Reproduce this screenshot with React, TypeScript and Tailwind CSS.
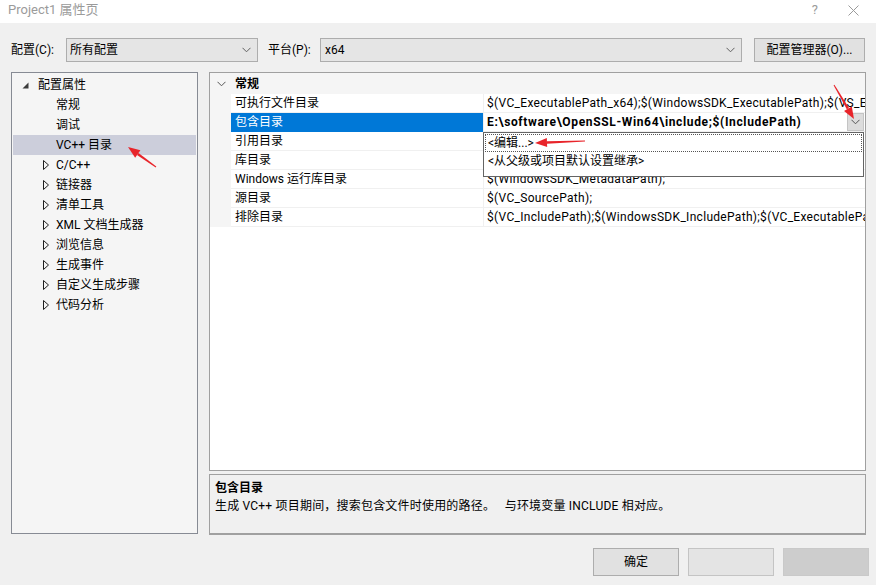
import React from "react";

const FONT = '"Segoe UI", Roboto, "Noto Sans CJK SC", sans-serif';

function Arrow({ x1, y1, x2, y2 }: { x1: number; y1: number; x2: number; y2: number }) {
  const dx = x2 - x1;
  const dy = y2 - y1;
  const len = Math.sqrt(dx * dx + dy * dy);
  const ux = dx / len;
  const uy = dy / len;
  const px = -uy;
  const py = ux;
  const hl = 12;
  const hw = 4.5;
  const bx = x2 - ux * hl;
  const by = y2 - uy * hl;
  const shaft = [
    [x1 + px * 0.5, y1 + py * 0.5],
    [bx + px * 1.3, by + py * 1.3],
    [bx - px * 1.3, by - py * 1.3],
    [x1 - px * 0.5, y1 - py * 0.5],
  ];
  const head = [
    [x2, y2],
    [bx + px * hw, by + py * hw],
    [bx - px * hw, by - py * hw],
  ];
  const s = (pts: number[][]) => pts.map((p) => p.join(",")).join(" ");
  return (
    <g fill="#e8242a">
      <polygon points={s(shaft)} />
      <polygon points={s(head)} />
    </g>
  );
}

function Chevron({ className = "", color = "#606060" }: { className?: string; color?: string }) {
  return (
    <svg width="9" height="6" viewBox="0 0 9 6" className={className}>
      <path d="M0.5 0.8 L4.5 4.8 L8.5 0.8" fill="none" stroke={color} strokeWidth="1" />
    </svg>
  );
}

const treeItems: { label: string; level: number; kind: "open" | "closed" | "none"; selected?: boolean }[] = [
  { label: "配置属性", level: 0, kind: "open" },
  { label: "常规", level: 1, kind: "none" },
  { label: "调试", level: 1, kind: "none" },
  { label: "VC++ 目录", level: 1, kind: "none", selected: true },
  { label: "C/C++", level: 1, kind: "closed" },
  { label: "链接器", level: 1, kind: "closed" },
  { label: "清单工具", level: 1, kind: "closed" },
  { label: "XML 文档生成器", level: 1, kind: "closed" },
  { label: "浏览信息", level: 1, kind: "closed" },
  { label: "生成事件", level: 1, kind: "closed" },
  { label: "自定义生成步骤", level: 1, kind: "closed" },
  { label: "代码分析", level: 1, kind: "closed" },
];

const rows: { name: string; value: string; selected?: boolean }[] = [
  { name: "可执行文件目录", value: "$(VC_ExecutablePath_x64);$(WindowsSDK_ExecutablePath);$(VS_ExecutablePath);$(MSBuild_ExecutablePath)" },
  { name: "包含目录", value: "E:\\software\\OpenSSL-Win64\\include;$(IncludePath)", selected: true },
  { name: "引用目录", value: "$(VC_ReferencesPath_x64);" },
  { name: "库目录", value: "$(LibraryPath)" },
  { name: "Windows 运行库目录", value: "$(WindowsSDK_MetadataPath);" },
  { name: "源目录", value: "$(VC_SourcePath);" },
  { name: "排除目录", value: "$(VC_IncludePath);$(WindowsSDK_IncludePath);$(VC_ExecutablePath_x64);$(VC_LibraryPath_x64)" },
];

export default function App() {
  return (
    <div
      className="relative w-[876px] h-[585px] bg-[#f0f0f0] overflow-hidden text-[12px] text-black"
      style={{ fontFamily: FONT }}
    >
      {/* title bar */}
      <div className="h-[23px] bg-white flex items-start justify-between pl-[8px] pt-[1px]">
        <span className="text-[13px] text-[#9b9b9b] leading-[18px]">Project1 属性页</span>
        <div className="flex items-start gap-[30px] pr-[17px] pt-[1px]">
          <span className="text-[13px] text-[#9b9b9b] leading-[16px]">?</span>
          <svg width="11" height="11" viewBox="0 0 11 11" className="mt-[3px]">
            <path d="M0.5 0.5 L10.5 10.5 M10.5 0.5 L0.5 10.5" stroke="#9b9b9b" strokeWidth="1" />
          </svg>
        </div>
      </div>

      {/* configuration row */}
      <div className="mt-[15px] flex items-center h-[24px] pl-[11px]">
        <span className="w-[55px]">配置(C):</span>
        <div className="w-[192px] h-[24px] bg-[#e5e5e5] border border-[#adadad] flex items-center justify-between pl-[3px] pr-[6px]">
          <span>所有配置</span>
          <Chevron />
        </div>
        <span className="ml-[10px] w-[52px]">平台(P):</span>
        <div className="w-[422px] h-[24px] bg-[#e5e5e5] border border-[#adadad] flex items-center justify-between pl-[4px] pr-[6px]">
          <span>x64</span>
          <Chevron />
        </div>
        <div className="ml-[12px] w-[111px] h-[24px] bg-[#e1e1e1] border border-[#adadad] flex items-center justify-center">
          配置管理器(O)...
        </div>
      </div>

      {/* main */}
      <div className="mt-[10px] flex pl-[11px] gap-[11px]">
        {/* tree */}
        <div className="w-[187px] h-[462px] bg-[#f5f5f5] border border-[#878b94] pt-[2px] px-[1px]">
          {treeItems.map((it) => (
            <div
              key={it.label}
              className={`h-[20px] flex items-center ${it.selected ? "bg-[#cccedb]" : ""}`}
            >
              {it.level === 0 ? (
                <div className="w-[25px] flex justify-start pl-[9px]">
                  <svg width="7" height="7" viewBox="0 0 7 7">
                    <polygon points="6.5,0.5 6.5,6.5 0.5,6.5" fill="#3c3c3c" />
                  </svg>
                </div>
              ) : (
                <div className="w-[43px] flex justify-start pl-[30px]">
                  {it.kind === "closed" ? (
                    <svg width="6" height="10" viewBox="0 0 6 10">
                      <polygon points="0.5,0.5 5.5,5 0.5,9.5" fill="none" stroke="#1e1e1e" strokeWidth="1" />
                    </svg>
                  ) : null}
                </div>
              )}
              <span className="leading-[20px]">{it.label}</span>
            </div>
          ))}
        </div>

        {/* right column */}
        <div className="w-[657px] flex flex-col gap-[3px]">
          {/* property grid */}
          <div className="relative h-[399px] bg-white border border-[#a0a0a0]">
            <div className="h-[21px] bg-[#f5f5f5] flex items-center">
              <div className="w-[21px] flex justify-center pl-[1px]">
                <Chevron color="#555555" />
              </div>
              <span className="font-bold pl-[4px]">常规</span>
            </div>
            {rows.map((r) => (
              <div key={r.name} className="h-[19px] flex">
                <div className="w-[21px] bg-[#f5f5f5]" />
                <div
                  className={`w-[252px] flex items-center pl-[4px] border-b ${
                    r.selected ? "bg-[#0078d7] text-white border-[#0078d7]" : "border-[#f0f0f0]"
                  }`}
                >
                  <span className="whitespace-nowrap">{r.name}</span>
                </div>
                <div className="flex-1 min-w-0 flex items-center border-l border-b border-[#f0f0f0] pl-[3px] overflow-hidden">
                  <span
                    className={`whitespace-nowrap flex-1 overflow-hidden ${
                      r.selected ? "font-bold tracking-[0.65px]" : "tracking-[0.3px]"
                    }`}
                  >
                    {r.value}
                  </span>
                  {r.selected ? (
                    <div className="w-[17px] h-[18px] bg-[#dcdcdc] border border-[#c4c4c4] flex items-center justify-center mr-[1px] shrink-0">
                      <Chevron color="#555555" />
                    </div>
                  ) : null}
                </div>
              </div>
            ))}

            {/* dropdown list */}
            <div className="absolute left-[273px] top-[59px] w-[381px] h-[45px] bg-white border border-[#646464] py-[1px] px-[1px]">
              <div className="h-[18px] flex items-center border border-dotted border-[#555] pl-[2px]">
                &lt;编辑...&gt;
              </div>
              <div className="h-[18px] flex items-center pl-[3px]">&lt;从父级或项目默认设置继承&gt;</div>
            </div>
          </div>

          {/* description */}
          <div className="h-[61px] bg-[#f0f0f0] border border-[#a0a0a0] border-b-2 px-[5px] pt-[4px]">
            <div className="font-bold leading-[18px]">包含目录</div>
            <div className="leading-[18px] whitespace-pre tracking-[0.2px]">
              {"生成 VC++ 项目期间，搜索包含文件时使用的路径。   与环境变量 INCLUDE 相对应。"}
            </div>
          </div>
        </div>
      </div>

      {/* buttons */}
      <div className="mt-[13px] flex justify-end gap-[9px] pr-[7px]">
        <div className="w-[86px] h-[28px] bg-[#e1e1e1] border border-[#adadad] flex items-center justify-center">确定</div>
        <div className="w-[86px] h-[28px] bg-[#e4e4e4] border border-[#c4c4c4]" />
        <div className="w-[86px] h-[28px] bg-[#cdcdcd] border border-[#c9c9c9]" />
      </div>

      {/* red annotation arrows */}
      <svg className="absolute inset-0 pointer-events-none" width="876" height="585">
        <Arrow x1={156} y1={167} x2={128} y2={147} />
        <Arrow x1={834} y1={85} x2={854} y2={119} />
        <Arrow x1={585} y1={141} x2={535} y2={143} />
      </svg>
    </div>
  );
}
